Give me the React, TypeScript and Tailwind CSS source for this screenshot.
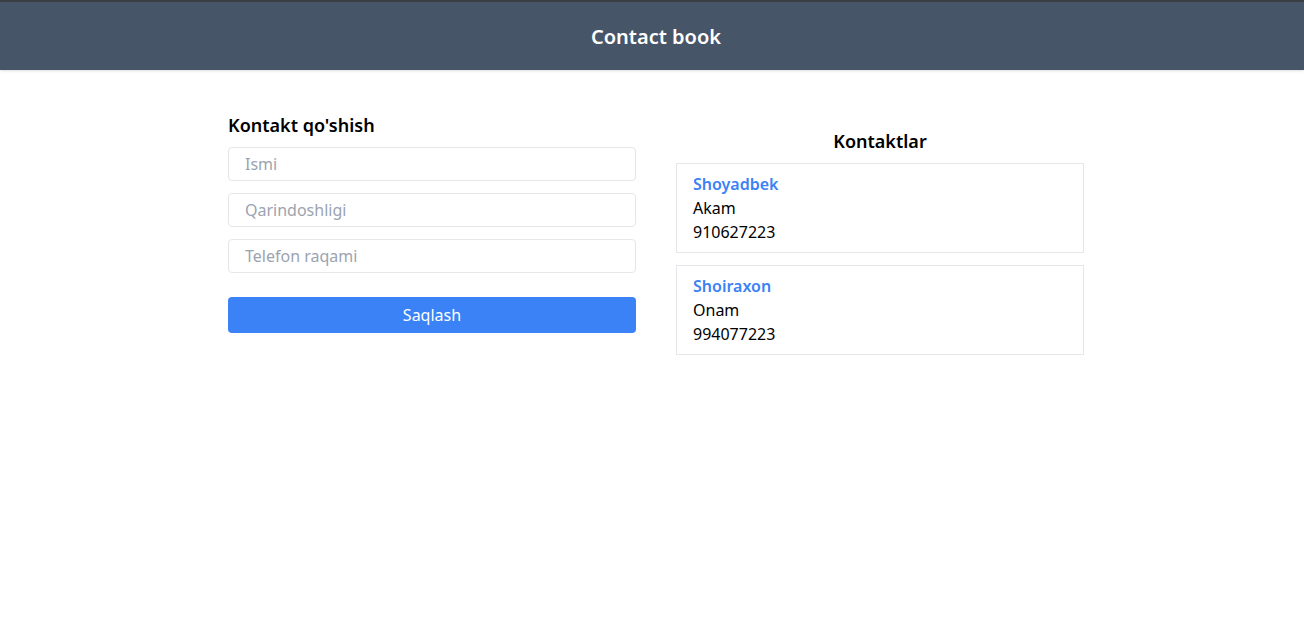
import React, { useState } from "react";

interface Contact {
  name: string;
  relation: string;
  phone: string;
}

const initialContacts: Contact[] = [
  { name: "Shoyadbek", relation: "Akam", phone: "910627223" },
  { name: "Shoiraxon", relation: "Onam", phone: "994077223" },
];

const App = () => {
  const [contacts, setContacts] = useState<Contact[]>(initialContacts);
  const [name, setName] = useState("");
  const [relation, setRelation] = useState("");
  const [phone, setPhone] = useState("");

  const handleSave = (e: React.FormEvent) => {
    e.preventDefault();
    if (!name.trim()) return;
    setContacts([...contacts, { name, relation, phone }]);
    setName("");
    setRelation("");
    setPhone("");
  };

  const inputClass =
    "w-full h-[34px] px-4 rounded border border-gray-200 text-base text-gray-900 placeholder:text-[#9ca3af] outline-none focus:border-blue-400";

  return (
    <div
      className="min-h-screen bg-white text-black"
      style={{ fontFamily: '"Noto Sans", "Open Sans", sans-serif' }}
    >
      <header className="h-[70px] bg-[#475569] border-t-2 border-[#3a3d42] shadow-sm flex items-center justify-center pl-2 pt-[2px]">
        <h1 className="text-xl font-semibold text-white">Contact book</h1>
      </header>

      <main className="w-[864px] mx-auto pl-2 pt-[41px] grid grid-cols-2 gap-10">
        {/* Add contact form */}
        <section>
          <h2 className="text-lg font-semibold leading-7 mb-[8px]">Kontakt qo'shish</h2>
          <form onSubmit={handleSave} className="flex flex-col gap-3">
            <input
              className={inputClass}
              placeholder="Ismi"
              value={name}
              onChange={(e) => setName(e.target.value)}
            />
            <input
              className={inputClass}
              placeholder="Qarindoshligi"
              value={relation}
              onChange={(e) => setRelation(e.target.value)}
            />
            <input
              className={inputClass}
              placeholder="Telefon raqami"
              value={phone}
              onChange={(e) => setPhone(e.target.value)}
            />
            <button
              type="submit"
              className="mt-3 h-9 w-full rounded bg-[#3b82f6] text-white text-base hover:bg-[#2563eb]"
            >
              Saqlash
            </button>
          </form>
        </section>

        {/* Contact list */}
        <section className="pt-4">
          <h2 className="text-lg font-semibold leading-7 text-center mb-[8px]">Kontaktlar</h2>
          <div className="flex flex-col gap-3">
            {contacts.map((c, i) => (
              <div key={i} className="border border-gray-200 px-4 py-2 leading-6">
                <div className="text-[#3b82f6] font-semibold">{c.name}</div>
                <div>{c.relation}</div>
                <div>{c.phone}</div>
              </div>
            ))}
          </div>
        </section>
      </main>
    </div>
  );
};

export default App;
